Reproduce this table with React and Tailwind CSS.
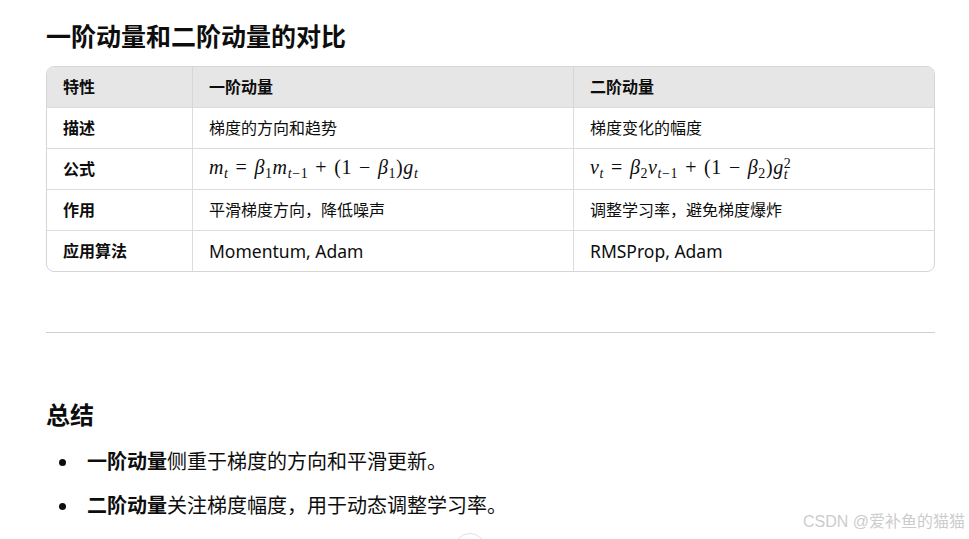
import React from "react";

const font = { fontFamily: '"Noto Sans", "Noto Sans CJK SC", sans-serif' };

function MathV({ children }) {
  return <i className="italic">{children}</i>;
}

function Sub({ children }) {
  return <span className="text-[0.7em] align-[-0.25em] not-italic">{children}</span>;
}

function Op({ children }) {
  return <span className="mx-[7px] not-italic">{children}</span>;
}

function FormulaM() {
  return (
    <span className="whitespace-nowrap text-[20px] leading-none font-['Liberation_Serif',serif] tracking-[0.6px]">
      <MathV>m</MathV><Sub><i>t</i></Sub>
      <Op>=</Op>
      <MathV>β</MathV><Sub>1</Sub>
      <MathV>m</MathV><Sub><i>t</i>−1</Sub>
      <Op>+</Op>
      (1<Op>−</Op><MathV>β</MathV><Sub>1</Sub>)
      <MathV>g</MathV><Sub><i>t</i></Sub>
    </span>
  );
}

function FormulaV() {
  return (
    <span className="whitespace-nowrap text-[20px] leading-none font-['Liberation_Serif',serif] tracking-[0.6px]">
      <MathV>v</MathV><Sub><i>t</i></Sub>
      <Op>=</Op>
      <MathV>β</MathV><Sub>2</Sub>
      <MathV>v</MathV><Sub><i>t</i>−1</Sub>
      <Op>+</Op>
      (1<Op>−</Op><MathV>β</MathV><Sub>2</Sub>)
      <MathV>g</MathV>
      <span className="inline-block align-[-5px] text-[0.7em] leading-[0.8]">
        <span className="block">2</span>
        <i className="block">t</i>
      </span>
    </span>
  );
}

const rows = [
  { name: "描述", a: "梯度的方向和趋势", b: "梯度变化的幅度" },
  { name: "公式", a: <FormulaM />, b: <FormulaV /> },
  { name: "作用", a: "平滑梯度方向，降低噪声", b: "调整学习率，避免梯度爆炸" },
  { name: "应用算法", a: "Momentum, Adam", b: "RMSProp, Adam", latin: true },
];

function Bullet({ strong, rest }) {
  return (
    <li className="flex items-center gap-[21px] pl-[13px]">
      <span className="w-[7px] h-[7px] rounded-full bg-[#0d0d0d] shrink-0" />
      <span><b>{strong}</b>{rest}</span>
    </li>
  );
}

export default function App() {
  return (
    <div className="relative w-[969px] h-[539px] overflow-hidden bg-white text-[#0d0d0d]" style={font}>
      <div className="pl-[46px] pr-[34px] pt-[20px] flex flex-col">
        <h2 className="text-[25px] leading-[32px] font-bold">一阶动量和二阶动量的对比</h2>

        <div className="mt-[14px] rounded-[8px] border border-[#d6d6d6] overflow-hidden">
          <div className="grid grid-cols-[146px_381px_1fr] bg-[#e6e6e6] h-[40px] text-[16px] font-bold">
            <div className="pl-[16px] flex items-center border-r border-[#d6d6d6]">特性</div>
            <div className="pl-[16px] flex items-center border-r border-[#d6d6d6]">一阶动量</div>
            <div className="pl-[16px] flex items-center">二阶动量</div>
          </div>
          {rows.map((r) => (
            <div key={r.name} className="grid grid-cols-[146px_381px_1fr] h-[41px] border-t border-[#dcdcdc] text-[16px]">
              <div className="pl-[16px] flex items-center font-bold border-r border-[#dcdcdc]">{r.name}</div>
              <div className={`pl-[16px] flex items-center border-r border-[#dcdcdc] ${r.latin ? "text-[17.5px]" : ""}`}>{r.a}</div>
              <div className={`pl-[16px] flex items-center ${r.latin ? "text-[17.5px]" : ""}`}>{r.b}</div>
            </div>
          ))}
        </div>

        <hr className="mt-[60px] border-t border-[#cfcfcf]" />

        <h3 className="mt-[66px] text-[24px] leading-[32px] font-bold">总结</h3>

        <ul className="mt-[16px] text-[20px] leading-[30px] flex flex-col gap-[14px]">
          <Bullet strong="一阶动量" rest="侧重于梯度的方向和平滑更新。" />
          <Bullet strong="二阶动量" rest="关注梯度幅度，用于动态调整学习率。" />
        </ul>
      </div>

      <div className="absolute left-[454px] top-[533px] w-[32px] h-[32px] rounded-full border border-[#e0e0e0] bg-white" />

      <div className="absolute right-[4px] top-[510px] text-[16px] text-[#cccccc] font-['Liberation_Sans','Noto_Sans_CJK_SC',sans-serif]">
        CSDN @爱补鱼的猫猫
      </div>
    </div>
  );
}
